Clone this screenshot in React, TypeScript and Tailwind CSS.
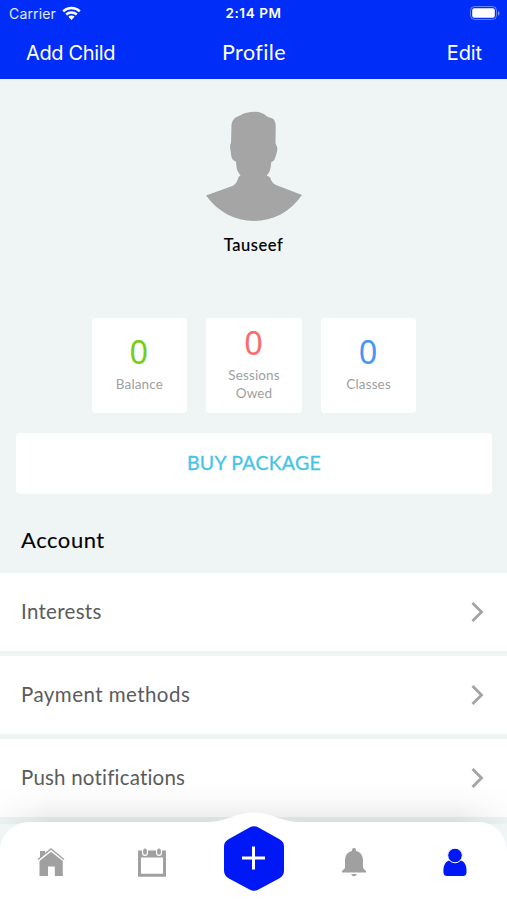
import React from "react";

const stats = [
  { value: "0", label: "Balance", color: "text-[#72cf12]" },
  { value: "0", label: "Sessions Owed", color: "text-[#f96c6c]" },
  { value: "0", label: "Classes", color: "text-[#4796f0]" },
];

const rows = [
  { label: "Interests", spacing: "tracking-[0.3px]" },
  { label: "Payment methods", spacing: "tracking-[0.45px]" },
  { label: "Push notifications", spacing: "tracking-[0.2px]" },
];

function Header() {
  return (
    <header className="h-[79px] bg-[#002df8] font-['Inter',sans-serif] text-white">
      <div className="grid h-[27px] grid-cols-3 items-center px-[9px] text-[14px]">
        <div className="flex items-center gap-[6px]">
          <span className="tracking-[0.15px] text-white/90">Carrier</span>
          <svg width="19" height="15" viewBox="0 0 19 15" fill="none" stroke="white" strokeWidth="2.5">
            <path d="M1.2 5.3C5.8.9 13.2.9 17.8 5.3" />
            <path d="M4.2 8.5c3-2.8 7.6-2.8 10.6 0" />
            <path d="M6.4 10.8a4.4 4.4 0 0 1 6.2 0L9.5 14Z" fill="white" stroke="none" />
          </svg>
        </div>
        <span className="whitespace-nowrap text-center text-[13.5px] font-semibold tracking-[0.6px]">2:14 PM</span>
        <svg className="-mr-[2px] justify-self-end" width="31" height="15" viewBox="0 0 31 15">
          <rect x="1.5" y=".5" width="26" height="13" rx="4" fill="none" stroke="white" strokeOpacity=".4" />
          <rect x="3.2" y="2.3" width="22.6" height="9.4" rx="2" fill="white" />
          <path d="M29 5c2 .7 2 4 0 4.7Z" fill="white" fillOpacity=".5" />
        </svg>
      </div>
      <div className="grid h-[51px] grid-cols-3 items-center pl-[26px] pr-[25px] text-[20px]">
        <span className="tracking-[-0.35px]">Add Child</span>
        <span className="text-center font-['Lato',sans-serif] text-[21.5px] tracking-[0.4px]">Profile</span>
        <span className="text-right tracking-[-0.1px]">Edit</span>
      </div>
    </header>
  );
}

function Avatar() {
  return (
    <svg width="98" height="111" viewBox="0 0 98 111" className="block" fill="#a5a5a5">
      <path d="M50 .8C44 .8 39 2 35 4.500C30 6 27 9 26.500 14L26 32C24.500 34 25 37 25.800 41C26.200 45 26.500 47 28 49L31 50.700C31.300 54 31.500 57 32.500 60L35.500 64.500L33.500 66C32.500 70 31 73 28 74.700L1 84.500C13 101 30 110 49 110C68 110 85 101 97 84L71 74C68 72.500 66 70 65 66.300L61.700 64.500C64 62 65 60 65.500 57L66.300 51C68.500 50.500 69.500 49 70 47C71 44 72.500 41 72.300 37C72 35 71 34 70.500 32L70.700 15C70.500 11 69.500 8.500 67.500 7.500C65.500 6.500 63.500 6.500 61.500 5C58.500 2.500 55 .8 50 .8Z" />
    </svg>
  );
}

function HomeIcon() {
  return (
    <svg width="28" height="28" viewBox="0 0 28 28" fill="#a0a0a0">
      <path d="M3 3h5v2.6L3 10Z" />
      <path d="M1 11.500 14 1l13 10.500" fill="none" stroke="#a0a0a0" strokeWidth="1.400" />
      <path d="M14 3.7 25.8 13v15h-8v-9.5h-6.800V28H2.500V13Z" />
    </svg>
  );
}

function CalendarIcon() {
  return (
    <svg width="28" height="29" viewBox="0 0 28 29">
      <path fillRule="evenodd" fill="#a0a0a0" d="M0 2.500h28v26.300H0ZM3 9.500v16.300h22V9.500Z" />
      <rect x="4" y="-1" width="6" height="9" rx="3" fill="white" />
      <rect x="18" y="-1" width="6" height="9" rx="3" fill="white" />
      <rect x="5.2" y="0.500" width="3.6" height="6.300" rx="1.8" fill="#a0a0a0" />
      <rect x="19.2" y="0.500" width="3.6" height="6.300" rx="1.8" fill="#a0a0a0" />
    </svg>
  );
}

function BellIcon() {
  return (
    <svg width="24" height="29" viewBox="0 0 24 29" fill="#a0a0a0">
      <path d="M10 3V2a2 2 0 0 1 4 0v1c5 1 7 5 7 10v7l3 3v1.500H0V23l3-3v-7C3 8 5 4 10 3Z" />
      <path d="M9.3 26h5.4c-.5 3-4.9 3-5.4 0Z" />
    </svg>
  );
}

function PersonIcon() {
  return (
    <svg width="24" height="29" viewBox="0 0 24 29" fill="#0018f5">
      <path d="M5.300 12.800h13.400C22.400 14.400 24 19.300 23.500 24.700c-.2 2.200-1.500 3.300-3.500 3.300H4C2 28 .700 26.900.5 24.700 0 19.300 1.600 14.400 5.300 12.800Z" />
      <circle cx="12" cy="7.500" r="7.300" fill="#0018f5" stroke="white" strokeWidth="1" />
    </svg>
  );
}

function TabBar() {
  return (
    <nav className="absolute bottom-0 left-0 h-[118px] w-full">
      <div className="absolute inset-x-0 top-0 h-[42px] bg-linear-to-b from-black/0 via-black/[0.025] to-black/[0.09] [mask-image:linear-gradient(to_right,rgba(0,0,0,0.2),black_50px,black_457px,rgba(0,0,0,0.2))]" />
      <svg className="absolute inset-0" width="507" height="118" viewBox="0 0 507 118">
        <path d="M0 69c0-16 13-29 29-29h175c12 0 19-2 28-5 14-6 29-6 43 0 9 3 16 5 28 5h175c16 0 29 13 29 29v49H0Z" fill="white" />
      </svg>
      <div className="relative flex h-full items-start justify-between pl-[37px] pr-[40px] pt-[66px]">
        <HomeIcon />
        <div className="ml-[29px]"><CalendarIcon /></div>
        <svg className="-mt-[24px] ml-[14px]" width="60" height="68" viewBox="0 0 60 68">
          <path d="M25.500 3.500Q30 1 34.500 3.500L55.500 15.300Q60 17.900 60 22.500V46.500Q60 51.500 55.500 54.200L34.500 65.500Q30 68 25.500 65.500L4.500 54.200Q0 51.500 0 46.500V22.500Q0 17.900 4.500 15.300Z" fill="#0018f5" />
          <path d="M29.500 22.500v23M18 34h23" stroke="white" strokeWidth="3" />
        </svg>
        <div className="ml-[14px]"><BellIcon /></div>
        <div className="ml-[33px]"><PersonIcon /></div>
      </div>
    </nav>
  );
}

export default function App() {
  return (
    <div className="relative h-[900px] w-[507px] overflow-hidden bg-[#eff4f5] font-['Lato',sans-serif]">
      <Header />
      <main>
        <section className="flex flex-col items-center pt-8">
          <Avatar />
          <h1 className="mt-[11px] text-[16.5px] font-medium leading-6 tracking-[0.55px] text-black [-webkit-text-stroke:0.1px_black]">Tauseef</h1>
        </section>
        <section className="mt-[60.5px] flex justify-center gap-[19px] pl-px">
          {stats.map((stat) => (
            <div key={stat.label} className="flex h-[95px] w-[95.6px] flex-col items-center justify-center rounded-[4px] bg-white px-4 pb-[3px] text-center">
              <span className={`-ml-px font-['Noto_Sans',sans-serif] text-[32.5px] leading-[36px] ${stat.color}`}>{stat.value}</span>
              <span className="mt-[5px] text-[13.5px] leading-[18px] tracking-[0.15px] text-[#a0a0a0]">{stat.label}</span>
            </div>
          ))}
        </section>
        <button className="mx-4 mt-[20.5px] block h-[61px] w-[476px] rounded-[4px] bg-white pb-px text-[19.500px] tracking-[0.25px] text-[#43c5e5] [-webkit-text-stroke:0.3px_#43c5e5]">BUY PACKAGE</button>
        <h2 className="pl-[21px] pt-[32px] text-[22px] leading-[28px] tracking-[0.55px] text-black [-webkit-text-stroke:0.1px_black]">Account</h2>
        <ul className="mt-[19px] flex flex-col gap-[5px]">
          {rows.map((row) => (
            <li key={row.label} className="flex h-[78px] items-center justify-between bg-white pl-[21px] pr-[22px]">
              <span className={`pb-px text-[20.500px] text-[#5b5b5b] ${row.spacing}`}>{row.label}</span>
              <svg className="-mt-px" width="15" height="20" viewBox="0 0 15 20" fill="none" stroke="#a3a3a3" strokeWidth="2.800">
                <path d="m2.500 1 9 9-9 9" />
              </svg>
            </li>
          ))}
        </ul>
      </main>
      <TabBar />
    </div>
  );
}
